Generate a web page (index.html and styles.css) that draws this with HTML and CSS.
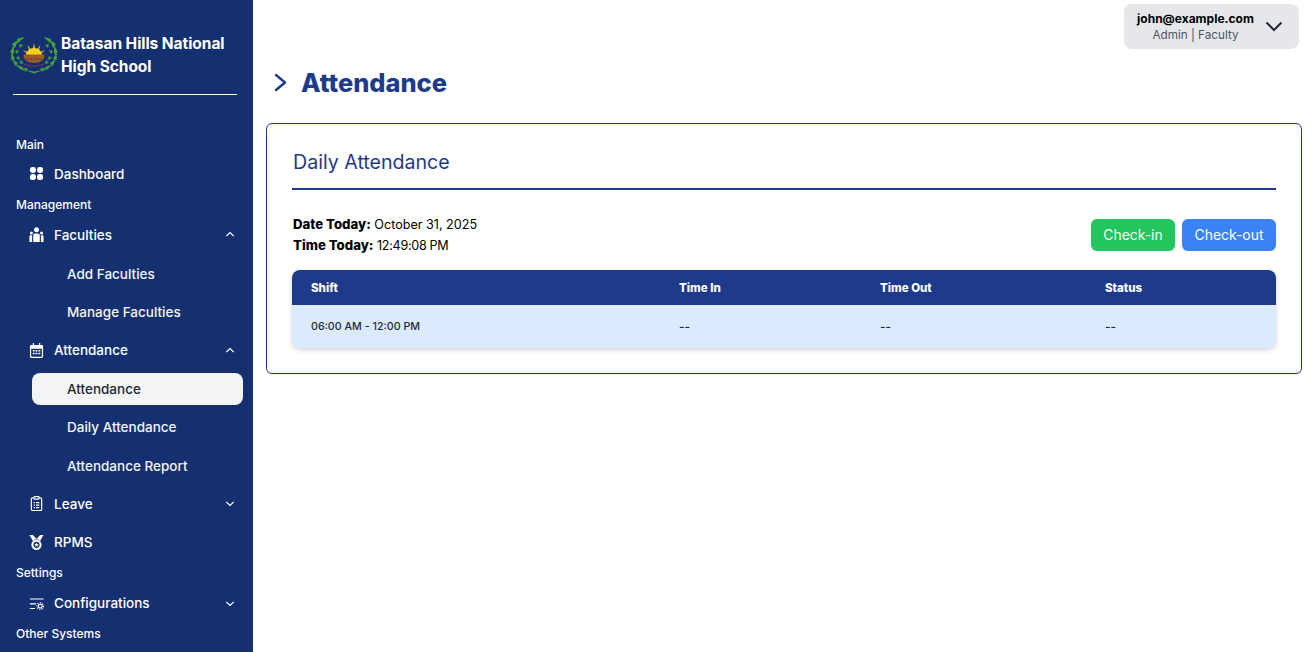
FILE: index.html
```html
<!DOCTYPE html>
<html lang="en">
<head>
<meta charset="utf-8">
<title>Attendance</title>
<link rel="stylesheet" href="styles.css">
</head>
<body>
<div class="app">
  <aside class="sidebar">
    <div class="brand">
      <svg class="logo" viewBox="0 0 48 38" aria-hidden="true">
        <g fill="none" stroke="#3f9a35" stroke-width="1.300" stroke-linecap="round">
          <path d="M13 2C5 6 1 13 2 20c1 7 6 12 14 15"/>
          <path d="M35 2c8 4 12 11 11 18-1 7-6 12-14 15"/>
        </g>
        <g fill="#46a338">
          <path d="M14 1L7 3 8 7zM8 4L2 8l3 4zM4 10L0 16l4 2zM2 17l-1 7 4-1zM3 24l2 6 3-3zM7 29l4 5 2-3zM12 32l6 3-1-3z"/>
          <path d="M34 1l7 2-1 4zM40 4l6 4-3 4zM44 10l4 6-4 2zM46 17l1 7-4-1zM45 24l-2 6-3-3zM41 29l-4 5-2-3zM36 32l-6 3 1-3z"/>
          <path d="M9 8l4 1-3 3zM5 15l4-1-2 4zM6 22l3-2 1 4zM9 27l3-3 1 4zM39 8l-4 1 3 3zM43 15l-4-1 2 4zM42 22l-3-2-1 4zM39 27l-3-3-1 4z"/>
          <path d="M15 34l9 1.500 9-1.500-9 3.500z"/>
        </g>
        <g fill="#f5c518">
          <path d="M24 7l1.300 7h-2.600zM17.500 9l4 5-2 1.300zM30.500 9l-4 5 2 1.300zM13 14l5.500 2.500-1 1.800zM35 14l-5.500 2.500 1 1.800z"/>
        </g>
        <path d="M16 19a8 7 0 0 1 16 0z" fill="#f7cf1e"/>
        <path d="M13.500 18.500h21c0 5.500-4 8.500-10.500 8.500s-10.500-3-10.500-8.500z" fill="#9a5a2b"/>
        <path d="M17 23h14" stroke="#5d3418" stroke-width="1" stroke-dasharray="2 1"/>
        <path d="M14 28c6 3 14 3 20 0" fill="none" stroke="#a8344b" stroke-width=".8"/>
      </svg>
      <div class="brand-name">Batasan Hills National High School</div>
    </div>
    <hr class="brand-rule">
    <nav class="nav">
      <div class="nav-label">Main</div>
      <a class="nav-item">
        <svg class="icon" viewBox="0 0 16 16"><rect x="1" y="1" width="6.400" height="6.400" rx="2.600"/><rect x="8.600" y="1" width="6.400" height="6.400" rx="2.600"/><rect x="1" y="8.600" width="6.400" height="6.400" rx="2.600"/><rect x="8.600" y="8.600" width="6.400" height="6.400" rx="2.600"/></svg>
        <span class="nav-text">Dashboard</span>
      </a>
      <div class="nav-label">Management</div>
      <a class="nav-item">
        <svg class="icon" viewBox="0 0 16 16"><circle cx="8" cy="3" r="2.700"/><circle cx="2.600" cy="6.400" r="1.600"/><circle cx="13.400" cy="6.400" r="1.600"/><path d="M6.500 6.800h3a2 2 0 0 1 2 2V16h-7V8.800a2 2 0 0 1 2-2zM1.500 8.800h1.800V16H.5V9.800a1 1 0 0 1 1-1zM12.700 8.800h1.800a1 1 0 0 1 1 1V16h-2.800z"/></svg>
        <span class="nav-text">Faculties</span>
        <svg class="caret" viewBox="0 0 12 8"><path d="M1.500 6L6 1.800 10.500 6"/></svg>
      </a>
      <a class="nav-sub">Add Faculties</a>
      <a class="nav-sub">Manage Faculties</a>
      <a class="nav-item">
        <svg class="icon" viewBox="0 0 16 16"><path fill-rule="evenodd" d="M4 0h1.300v2h5.400V0H12v2h1.500A1.500 1.500 0 0 1 15 3.500v11a1.500 1.500 0 0 1-1.500 1.500h-11A1.500 1.500 0 0 1 1 14.500v-11A1.500 1.500 0 0 1 2.500 2H4zM2.300 6v8.200c0 .3.200.5.500.5h10.400c.3 0 .5-.2.500-.5V6z"/><path d="M4 7.500h2v1.600H4zM7 7.500h2v1.600H7zM10 7.500h2v1.600h-2zM4 10.500h2v1.600H4zM7 10.500h2v1.600H7zM10 10.500h2v1.600h-2z"/></svg>
        <span class="nav-text">Attendance</span>
        <svg class="caret" viewBox="0 0 12 8"><path d="M1.500 6L6 1.800 10.500 6"/></svg>
      </a>
      <a class="nav-sub is-active">Attendance</a>
      <a class="nav-sub">Daily Attendance</a>
      <a class="nav-sub">Attendance Report</a>
      <a class="nav-item">
        <svg class="icon" viewBox="0 0 16 16"><path class="icon-line" d="M5 2H3.800A1.300 1.300 0 0 0 2.500 3.300v10.900a1.300 1.300 0 0 0 1.300 1.300h8.400a1.300 1.300 0 0 0 1.300-1.300V3.300A1.300 1.300 0 0 0 12.200 2H11"/><rect class="icon-line" x="5.200" y=".7" width="5.600" height="2.600" rx=".8"/><path d="M5 6.300h1.300v1.300H5zM7.500 6.300H11v1.300H7.500zM5 9h1.300v1.300H5zM7.500 9H11v1.300H7.500zM5 11.700h1.300V13H5zM7.500 11.700H11V13H7.500z"/></svg>
        <span class="nav-text">Leave</span>
        <svg class="caret" viewBox="0 0 12 8"><path d="M1.500 2L6 6.200 10.500 2"/></svg>
      </a>
      <a class="nav-item">
        <svg class="icon" viewBox="0 0 16 16"><path d="M.5 0h3.600L8 4.300 11.900 0h3.600l-3.700 6.300a5.800 5.800 0 0 0-7.600 0z"/><path fill-rule="evenodd" d="M8 5a5.500 5.500 0 1 1 0 11A5.500 5.500 0 0 1 8 5zm0 2.200a3.300 3.300 0 1 0 0 6.600 3.300 3.300 0 0 0 0-6.600z"/><path d="M8 8.300l.7 1.400 1.600.2-1.200 1.100.3 1.500L8 11.800l-1.400.7.300-1.500-1.200-1.100 1.600-.2z"/></svg>
        <span class="nav-text">RPMS</span>
      </a>
      <div class="nav-label">Settings</div>
      <a class="nav-item">
        <svg class="icon" viewBox="0 0 16 16"><path d="M1 2.600h14.500v1.200H1zM1 7.800h6.500V9H1zM1 12.700h5.500v1.200H1z"/><circle class="icon-line" cx="12" cy="10.800" r="2"/><circle class="icon-teeth" cx="12" cy="10.800" r="3.500"/></svg>
        <span class="nav-text">Configurations</span>
        <svg class="caret" viewBox="0 0 12 8"><path d="M1.500 2L6 6.200 10.500 2"/></svg>
      </a>
      <div class="nav-label">Other Systems</div>
    </nav>
  </aside>
  <main class="main">
    <header class="topbar">
      <div class="user">
        <div class="user-info">
          <div class="user-email">john@example.com</div>
          <div class="user-role">Admin | Faculty</div>
        </div>
        <svg class="user-caret" viewBox="0 0 18 11"><path d="M1.500 1.500L9 9l7.500-7.500"/></svg>
      </div>
    </header>
    <div class="page-head">
      <svg class="page-chevron" viewBox="0 0 13 19"><path d="M2 2l9 7.500L2 17"/></svg>
      <h1 class="page-title">Attendance</h1>
    </div>
    <section class="card">
      <h2 class="card-title">Daily Attendance</h2>
      <div class="info-row">
        <div class="clock">
          <div class="clock-line"><b>Date Today:</b> October 31, 2025</div>
          <div class="clock-line"><b>Time Today:</b> <span class="clock-time">12:49:08 PM</span></div>
        </div>
        <div class="actions">
          <button class="btn btn-in">Check-in</button>
          <button class="btn btn-out">Check-out</button>
        </div>
      </div>
      <div class="table">
        <div class="t-row t-head">
          <div>Shift</div><div>Time In</div><div>Time Out</div><div>Status</div>
        </div>
        <div class="t-row t-body">
          <div class="t-shift">06:00 AM - 12:00 PM</div><div>--</div><div>--</div><div>--</div>
        </div>
      </div>
    </section>
  </main>
</div>
</body>
</html>
```

FILE: styles.css
```css
* { box-sizing: border-box; }
html, body { margin: 0; height: 100%; overflow: hidden; background: #fff; }
body { font-family: Inter, "Noto Sans", sans-serif; color: #000; }
.app { display: flex; height: 652px; }

.sidebar { flex: 0 0 253px; background: #153070; color: #fff; overflow: hidden; }
.brand { display: flex; align-items: center; padding: 32px 10px 0; gap: 3px; }
.logo { width: 48px; height: 38px; flex: none; }
.brand-name { font-size: 15.500px; font-weight: 700; line-height: 23px; letter-spacing: -.05px; width: 175px; }
.brand-rule { margin: 16px 16px 0 13px; border: 0; border-top: 1px solid #fff; }

.nav { display: flex; flex-direction: column; padding: 41px 10px 0 16px; }
.nav-label { height: 18px; line-height: 18px; font-size: 12px; font-weight: 500; margin: 3px 0 1.800px; }
.nav-label:first-child { margin: 0 0 .5px; }
.nav-item { display: flex; align-items: center; height: 38.400px; padding: 0 8px 0 13px; font-size: 13.500px; font-weight: 500; }
.icon { width: 15px; height: 15px; fill: #fff; flex: none; }
.icon-line { fill: none; stroke: #fff; stroke-width: 1.300; }
.icon-teeth { fill: none; stroke: #fff; stroke-width: 1.300; stroke-dasharray: 1.300 1.300; }
.nav-text { margin-left: 10px; flex: 1; }
.caret { width: 10px; height: 7px; fill: none; stroke: #fff; stroke-width: 1.500; flex: none; }
.nav-sub { display: flex; align-items: center; height: 32px; margin: 3.600px 0 2.800px 16px; padding-left: 35px; border-radius: 8px; font-size: 13.500px; font-weight: 500; color: #f3f4f6; }
.nav-sub.is-active { background: #f3f4f6; color: #1f2937; }

.main { flex: 1; min-width: 0; padding: 0 12px 0 13px; }
.topbar { display: flex; justify-content: flex-end; padding: 4px 3px 0 0; }
.user { display: flex; align-items: center; width: 175px; height: 45px; padding-left: 13px; background: #e5e7eb; border-radius: 8px; }
.user-info { width: 117px; padding-top: 1px; text-align: center; white-space: nowrap; }
.user-email { font-size: 12px; font-weight: 700; line-height: 16px; }
.user-role { font-size: 11.700px; line-height: 16px; color: #4b5563; }
.user-caret { width: 18px; height: 11px; margin-left: 11px; fill: none; stroke: #1f2937; stroke-width: 2; flex: none; }

.page-head { display: flex; align-items: center; gap: 14px; padding: 7px 0 0 8px; height: 61px; }
.page-chevron { width: 13px; height: 19px; fill: none; stroke: #1e3a8a; stroke-width: 2.400; stroke-linecap: round; stroke-linejoin: round; flex: none; margin-top: -2px; }
.page-title { margin: 0; font-size: 25.400px; font-weight: 800; color: #1e3a8a; line-height: 36px; }

.card { margin-top: 13px; width: 1036px; height: 251px; padding: 25px 25px 0 25px; background: #fff; border: 1px solid #1e3a8a; border-radius: 6px; box-shadow: 0 1px 1px rgba(0,0,0,.06); }
.card-title { margin: 0; height: 41px; padding-left: 1px; font-size: 19.600px; font-weight: 400; line-height: 26px; color: #1e3a8a; border-bottom: 2px solid #1e3a8a; }
.info-row { display: flex; justify-content: space-between; align-items: center; height: 40px; margin-top: 25px; }
.clock { padding-left: 1px; }
.clock-line { font-size: 12.600px; line-height: 20px; }
.clock-line b { font-size: 13.200px; font-weight: 800; }
.clock-time { letter-spacing: -.3px; }
.actions { display: flex; gap: 7px; }
.btn { height: 32px; padding: 0; border: 0; border-radius: 6px; color: #fff; font: 400 13.900px Inter, sans-serif; }
.btn-in { width: 84px; background: #22c55e; }
.btn-out { width: 94px; background: #3b82f6; }

.table { margin-top: 15px; border-radius: 8px; overflow: hidden; box-shadow: 0 2px 5px rgba(0,0,0,.18); }
.t-row { display: grid; grid-template-columns: 368px 201px 225px 190px; align-items: center; }
.t-row > div { padding-left: 19px; }
.t-head { height: 35px; background: #1e3a8a; color: #fff; font-size: 11.500px; font-weight: 800; }
.t-body { height: 43px; background: #dbeafe; color: #1f2937; font-size: 12px; font-weight: 500; }
.t-body .t-shift { font-size: 10.700px; }
```
